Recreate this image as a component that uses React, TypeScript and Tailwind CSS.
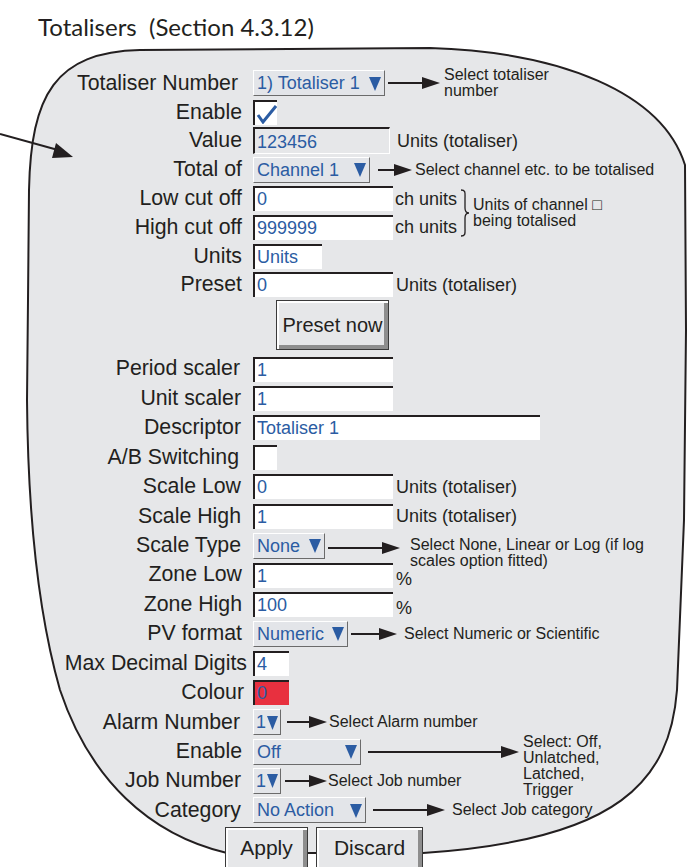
import React from "react";

const BLUE = "text-[#2b5ca3]";

function Tri() {
  return (
    <svg width="12" height="15" viewBox="0 0 12 15" className="shrink-0">
      <polygon points="0,1 12,1 6,15" fill="#2b5ca3" />
    </svg>
  );
}

function Arrow({ len }: { len: number }) {
  return (
    <svg width={len} height="14" viewBox={`0 0 ${len} 14`} className="shrink-0">
      <line x1="0" y1="7" x2={len - 16} y2="7" stroke="#231f20" strokeWidth="2" />
      <polygon points={`${len - 18},1 ${len},7 ${len - 18},13`} fill="#231f20" />
    </svg>
  );
}

function Row({
  label,
  children,
  h,
  lp,
  lw,
  fm,
}: {
  label: string;
  children?: React.ReactNode;
  h: string;
  lp?: string;
  lw?: string;
  fm?: string;
}) {
  return (
    <div className={`flex items-center ${h}`}>
      <div
        className={`${lw ?? "w-[243px]"} shrink-0 text-right text-[21.3px] leading-none text-[#231f20] whitespace-nowrap ${lp ?? "pr-[1px]"}`}
      >
        {label}
      </div>
      <div className={`${fm ?? "ml-[10px]"} flex items-center`}>{children}</div>
    </div>
  );
}

function Input({ w, value, bg }: { w: string; value: string; bg?: string }) {
  return (
    <div
      className={`h-[25px] ${w} ${bg ?? "bg-white"} border-t-2 border-l-2 border-[#231f20] pl-[2px] text-[18px] leading-[23px] ${BLUE} whitespace-nowrap overflow-hidden`}
    >
      {value}
    </div>
  );
}

function Select({ w, value, narrow }: { w: string; value: string; narrow?: boolean }) {
  return (
    <div
      className={`h-[26px] ${w} flex items-center justify-between bg-[#e3e5e9] border border-t-white border-l-white border-r-[#6b6b6b] border-b-[#6b6b6b] ${narrow ? "pl-[2px] pr-[2px]" : "pl-[3px] pr-[3px]"}`}
    >
      <span className={`text-[18px] leading-none ${BLUE} whitespace-nowrap`}>{value}</span>
      {narrow ? (
        <svg width="11" height="15" viewBox="0 0 11 15" className="shrink-0">
          <polygon points="0,1 11,1 5.5,15" fill="#2b5ca3" />
        </svg>
      ) : (
        <Tri />
      )}
    </div>
  );
}

function Note({ children, cls }: { children: React.ReactNode; cls?: string }) {
  return (
    <div className={`text-[16px] leading-[16px] text-[#231f20] whitespace-nowrap ${cls ?? ""}`}>{children}</div>
  );
}

function Side({ children, cls }: { children: React.ReactNode; cls: string }) {
  return <div className={`text-[18px] leading-none text-[#231f20] whitespace-nowrap ${cls}`}>{children}</div>;
}

export default function App() {
  const A = "h-[28.8px]";
  const B = "h-[29.43px]";
  return (
    <div className="relative w-[687px] h-[867px] overflow-hidden bg-white font-['Liberation_Sans',Arial,sans-serif]">
      <svg className="absolute inset-0" width="687" height="867" viewBox="0 0 687 867">
        <path
          d="M 28 300 L 29 190 C 31 95 55 52 140 50 L 430 48 C 560 52 662 92 685 165 L 686 330 L 684 520 L 677 690 C 670 780 620 840 423 853 L 227 853 C 150 835 90 780 60 690 C 40 620 28 520 27 400 Z"
          fill="#e6e7e9"
          stroke="#231f20"
          strokeWidth="2"
        />
        <line x1="0" y1="134" x2="58" y2="150" stroke="#231f20" strokeWidth="2" />
        <polygon points="73,157 52,158 56,143" fill="#231f20" />
      </svg>

      <div className="relative flex flex-col">
        <div className="h-[69px] pl-[38px] pt-[15px] text-[24px] leading-none text-[#231f20] font-['Lato',sans-serif] whitespace-pre">
          {"Totalisers  (Section 4.3.12)"}
        </div>

        <Row label="Totaliser Number" h={A} lp="pr-[5px]">
          <Select w="w-[132px]" value="1) Totaliser 1" />
          <div className="ml-[3px]">
            <Arrow len={52} />
          </div>
          <Note cls="ml-[4px] -my-[10px] leading-[15px]">
            <div>Select totaliser</div>
            <div>number</div>
          </Note>
        </Row>
        <Row label="Enable" h={A}>
          <div className="h-[25px] w-[24px] bg-white border-t-2 border-l-2 border-[#231f20] flex items-center justify-center">
            <svg width="21" height="21" viewBox="0 0 21 21">
              <path d="M2 12 L7 19 L20 3" fill="none" stroke="#2b5ca3" strokeWidth="3" strokeLinejoin="miter" />
            </svg>
          </div>
        </Row>
        <Row label="Value" h={A}>
          <div
            className={`h-[27px] w-[137px] bg-[#e6e7e9] border-t-2 border-l-2 border-[#231f20] border-r border-b border-r-white border-b-white pl-[2px] text-[18px] leading-[26px] ${BLUE}`}
          >
            123456
          </div>
          <Side cls="ml-[7px]">Units (totaliser)</Side>
        </Row>
        <Row label="Total of" h={A}>
          <Select w="w-[117px]" value="Channel 1" />
          <div className="ml-[8px]">
            <Arrow len={34} />
          </div>
          <Note cls="ml-[3px]">Select channel etc. to be totalised</Note>
        </Row>
        <div className="flex items-center">
          <div className="flex flex-col">
            <Row label="Low cut off" h={A}>
              <Input w="w-[140px]" value="0" />
              <Side cls="ml-[2px]">ch units</Side>
            </Row>
            <Row label="High cut off" h={A}>
              <Input w="w-[140px]" value="999999" />
              <Side cls="ml-[2px]">ch units</Side>
            </Row>
          </div>
          <svg width="10" height="48" viewBox="0 0 10 48" className="ml-[3px]">
            <path d="M1 1 C6 1 5 4 5 10 L5 19 C5 22 6 24 9 24 C6 24 5 26 5 29 L5 38 C5 44 6 47 1 47" fill="none" stroke="#231f20" strokeWidth="1.3" />
          </svg>
          <Note cls="ml-[3px]">
            <div>Units of channel □</div>
            <div>being totalised</div>
          </Note>
        </div>
        <Row label="Units" h={A}>
          <Input w="w-[69px]" value="Units" />
        </Row>
        <Row label="Preset" h={A}>
          <Input w="w-[140px]" value="0" />
          <Side cls="ml-[3px]">Units (totaliser)</Side>
        </Row>

        <div className="h-[55px] pt-[1px] pl-[276px]">
          <div className="h-[50px] w-[113px] bg-[#e6e7e9] border border-[#3a3a3a] shadow-[inset_2px_2px_0_#ffffff,inset_-4px_-4px_0_#8e8e8e] flex items-center justify-center text-[20px] text-[#231f20]">
            Preset now
          </div>
        </div>

        <Row label="Period scaler" h={B} lp="pr-[3px]">
          <Input w="w-[140px]" value="1" />
        </Row>
        <Row label="Unit scaler" h={B} lp="pr-[2px]">
          <Input w="w-[140px]" value="1" />
        </Row>
        <Row label="Descriptor" h={B} lp="pr-[2px]">
          <Input w="w-[287px]" value="Totaliser 1" />
        </Row>
        <Row label="A/B Switching" h={B} lp="pr-[4px]">
          <div className="h-[25px] w-[24px] bg-white border-t-2 border-l-2 border-[#231f20]" />
        </Row>
        <Row label="Scale Low" h={B} lp="pr-[2px]">
          <Input w="w-[140px]" value="0" />
          <Side cls="ml-[3px]">Units (totaliser)</Side>
        </Row>
        <Row label="Scale High" h={B} lp="pr-[2px]">
          <Input w="w-[140px]" value="1" />
          <Side cls="ml-[3px]">Units (totaliser)</Side>
        </Row>
        <Row label="Scale Type" h={B} lp="pr-[2px]">
          <Select w="w-[72px]" value="None" />
          <div className="ml-[3px] mt-[4px]">
            <Arrow len={72} />
          </div>
          <Note cls="ml-[10px] -my-[10px] mt-[4px] leading-[15px]">
            <div>Select None, Linear or Log (if log</div>
            <div>scales option fitted)</div>
          </Note>
        </Row>
        <Row label="Zone Low" h={B}>
          <Input w="w-[140px]" value="1" />
          <Side cls="ml-[3px] mt-[8px]">%</Side>
        </Row>
        <Row label="Zone High" h={B}>
          <Input w="w-[140px]" value="100" />
          <Side cls="ml-[3px] mt-[8px]">%</Side>
        </Row>
        <Row label="PV format" h={B}>
          <Select w="w-[95px]" value="Numeric" />
          <div className="ml-[3px]">
            <Arrow len={46} />
          </div>
          <Note cls="ml-[7px]">Select Numeric or Scientific</Note>
        </Row>
        <Row label="Max Decimal Digits" h={B} lw="w-[247px]" lp="pr-0" fm="ml-[6px]">
          <Input w="w-[36px]" value="4" />
        </Row>
        <Row label="Colour" h={B} lw="w-[244px]" lp="pr-0" fm="ml-[9px]">
          <Input w="w-[36px]" value="0" bg="bg-[#e8303f]" />
        </Row>
        <Row label="Alarm Number" h={B} lp="pr-[3px]">
          <Select w="w-[28px]" value="1" narrow />
          <div className="ml-[6px]">
            <Arrow len={40} />
          </div>
          <Note cls="ml-[2px]">Select Alarm number</Note>
        </Row>
        <Row label="Enable" h={B}>
          <Select w="w-[108px]" value="Off" />
          <div className="ml-[7px]">
            <Arrow len={151} />
          </div>
          <Note cls="ml-[4px] -my-[20px] mt-[8px] leading-[15.5px]">
            <div>Select: Off,</div>
            <div>Unlatched,</div>
            <div>Latched,</div>
            <div>Trigger</div>
          </Note>
        </Row>
        <Row label="Job Number" h={B} lp="pr-[2px]">
          <Select w="w-[28px]" value="1" narrow />
          <div className="ml-[4px]">
            <Arrow len={42} />
          </div>
          <Note cls="ml-[1px]">Select Job number</Note>
        </Row>
        <Row label="Category" h={B} lp="pr-[2px]">
          <Select w="w-[113px]" value="No Action" />
          <div className="ml-[7px]">
            <Arrow len={72} />
          </div>
          <Note cls="ml-[7px]">Select Job category</Note>
        </Row>

        <div className="flex pt-[2px] pl-[225px] gap-[8px]">
          <div className="h-[46px] w-[83px] pb-[4px] bg-[#e6e7e9] border border-[#3a3a3a] shadow-[inset_2px_2px_0_#ffffff,inset_-4px_-4px_0_#8e8e8e] flex items-center justify-center text-[21px] text-[#231f20]">
            Apply
          </div>
          <div className="h-[46px] w-[107px] pb-[4px] bg-[#e6e7e9] border border-[#3a3a3a] shadow-[inset_2px_2px_0_#ffffff,inset_-4px_-4px_0_#8e8e8e] flex items-center justify-center text-[21px] text-[#231f20]">
            Discard
          </div>
        </div>
      </div>
    </div>
  );
}
